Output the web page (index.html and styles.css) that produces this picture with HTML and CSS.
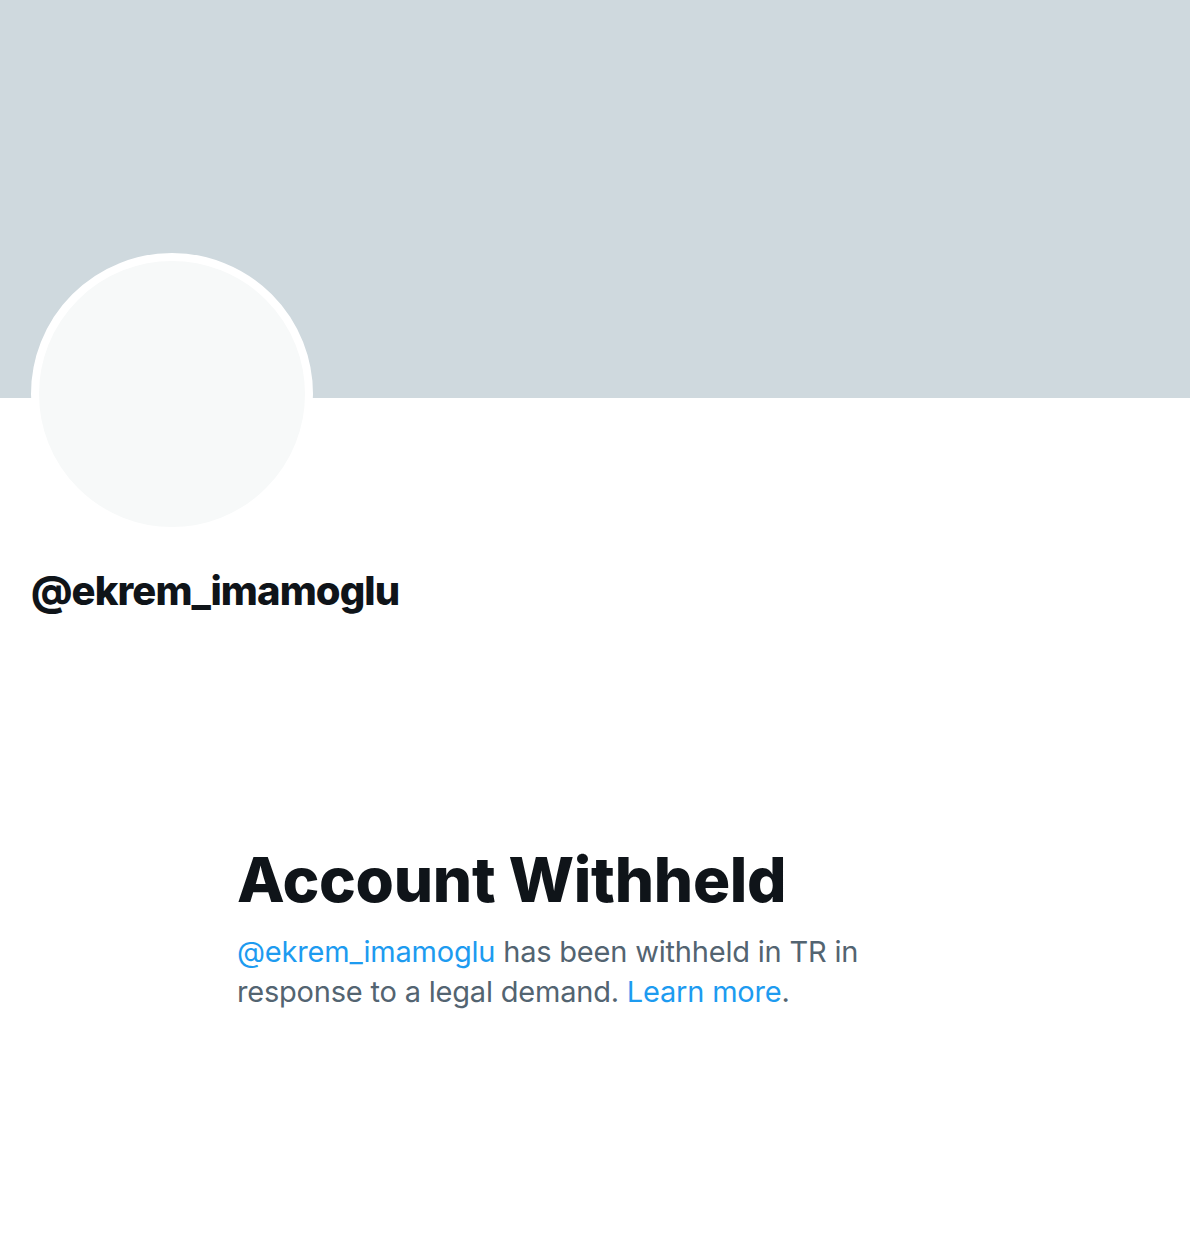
FILE: index.html
```html
<!DOCTYPE html>
<html lang="en">
<head>
    <meta charset="UTF-8">
    <meta name="viewport" content="width=device-width, initial-scale=1.0">
    <title>@ekrem_imamoglu</title>
    <link rel="stylesheet" href="styles.css">
</head>
<body>
    <div class="profile">
        <div class="banner"></div>
        <div class="profile-info">
            <div class="avatar"></div>
            <h2 class="handle">@ekrem_imamoglu</h2>
        </div>
        <div class="withheld">
            <h1>Account Withheld</h1>
            <p>
                <a href="#">@ekrem_imamoglu</a> has been withheld in TR in
                response to a legal demand. <a href="#">Learn more</a>.
            </p>
        </div>
    </div>
</body>
</html>
```
FILE: styles.css
```css
* {
    margin: 0;
    padding: 0;
    box-sizing: border-box;
}

body {
    font-family: Inter, "Noto Sans", sans-serif;
    background-color: #ffffff;
    color: #0f1419;
}

.banner {
    height: 398px;
    background-color: #cfd9de;
}

.profile-info {
    padding: 0 31px;
}

.avatar {
    width: 282px;
    height: 282px;
    margin-top: -145px;
    border-radius: 50%;
    border: 8px solid #ffffff;
    background-color: #f7f9f9;
}

.handle {
    margin-top: 32px;
    font-size: 40px;
    font-weight: 800;
    line-height: 48px;
    letter-spacing: -0.9px;
}

.withheld {
    margin: 229px 0 0 237px;
    max-width: 650px;
}

.withheld h1 {
    font-size: 62px;
    font-weight: 800;
    line-height: 72px;
    letter-spacing: -0.3px;
}

.withheld p {
    margin-top: 16px;
    font-size: 29px;
    line-height: 40px;
    letter-spacing: -0.2px;
    color: #536471;
}

.withheld a {
    color: #1d9bf0;
    text-decoration: none;
}
```
